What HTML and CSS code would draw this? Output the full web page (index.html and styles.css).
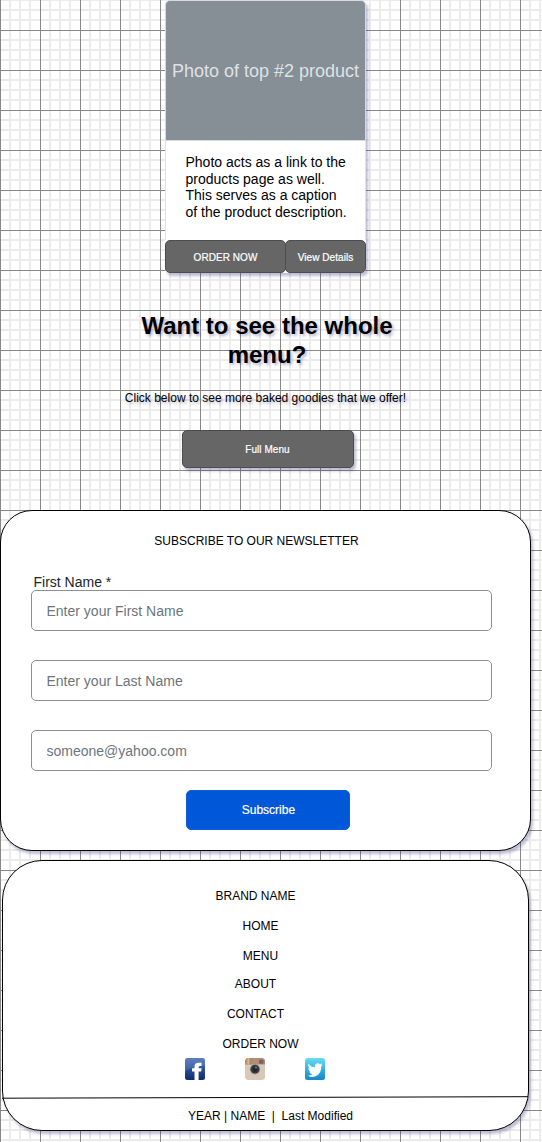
FILE: index.html
```html
<!DOCTYPE html>
<html lang="en">
<head>
<meta charset="utf-8">
<title>Bakery wireframe</title>
<link rel="stylesheet" href="styles.css">
</head>
<body>
<main class="page">
  <article class="card">
    <div class="photo">Photo of top #2 product</div>
    <p class="caption">Photo acts as a link to the<br>products page as well.<br>This serves as a caption<br>of the product description.</p>
    <div class="actions">
      <button class="btn order">ORDER NOW</button>
      <button class="btn details">View Details</button>
    </div>
  </article>
  <section class="menu">
    <h1>Want to see the whole<br>menu?</h1>
    <p class="blurb">Click below to see more baked goodies that we offer!</p>
    <button class="btn full">Full Menu</button>
  </section>
  <form class="newsletter">
    <h2>SUBSCRIBE TO OUR NEWSLETTER</h2>
    <label for="first">First Name *</label>
    <input id="first" placeholder="Enter your First Name">
    <input placeholder="Enter your Last Name">
    <input placeholder="someone@yahoo.com">
    <button type="button" class="subscribe">Subscribe</button>
  </form>
  <footer class="footer">
    <nav class="links">
      <a class="left">BRAND NAME</a>
      <a>HOME</a>
      <a class="tight">MENU</a>
      <a class="left">ABOUT</a>
      <a class="left">CONTACT</a>
      <a>ORDER NOW</a>
    </nav>
    <div class="social">
      <svg width="20" height="22" viewBox="0 0 20 22">
        <defs><linearGradient id="fb" x1="0" y1="0" x2="0" y2="1"><stop offset="0" stop-color="#5277b9"/><stop offset=".5" stop-color="#2d5098"/><stop offset="1" stop-color="#10296c"/></linearGradient></defs>
        <rect width="20" height="22" rx="2.5" fill="url(#fb)"/>
        <path d="M0 2.5Q0 0 2.5 0h15Q20 0 20 2.5V8Q9 8 0 13z" fill="#7894cc" opacity=".3"/>
        <path d="M9.500 22v-8.500H7v-3.300h2.500V8.600Q9.500 4.800 13.500 4.800H16.500v3.100h-1.400q-1.500 0-1.500 1.300v1h3l-.5 3.300h-2.500V22z" fill="#fff"/>
      </svg>
      <svg width="20" height="22" viewBox="0 0 20 22">
        <defs><clipPath id="cam"><rect width="20" height="22" rx="3.500"/></clipPath></defs>
        <g clip-path="url(#cam)">
          <rect width="20" height="22" fill="#d8c8b8"/>
          <rect width="20" height="6.500" fill="#b58b72"/>
          <rect width="1.500" height="6.500" x="1" fill="#d9896f"/>
          <rect width="1.500" height="6.500" x="2.500" fill="#d9bd78"/>
          <rect width="1.500" height="6.500" x="4" fill="#92aa83"/>
          <rect width="1.500" height="6.500" x="5.500" fill="#7698a5"/>
        </g>
        <rect x="14" y="1.800" width="4.500" height="4" rx="1" fill="#6a686a"/>
        <circle cx="10" cy="11.200" r="5.200" fill="#a39b92"/>
        <circle cx="10" cy="11.200" r="4.400" fill="#343b42"/>
        <circle cx="10" cy="11.200" r="2.500" fill="#20262c"/>
        <circle cx="11" cy="9.600" r="1.100" fill="#6b747b"/>
      </svg>
      <svg width="20" height="22" viewBox="0 0 20 22">
        <defs><linearGradient id="tw" x1="0" y1="0" x2="0" y2="1"><stop offset="0" stop-color="#6bdcf2"/><stop offset=".5" stop-color="#35b4de"/><stop offset="1" stop-color="#1687c8"/></linearGradient></defs>
        <rect width="20" height="22" rx="2.500" fill="url(#tw)"/>
        <path transform="translate(-.7 .4) scale(1.05)" d="M4 5.200Q6.500 8.500 10 8.700 9.500 4.800 12.700 4.500q1.400 0 2.300 1 1.200-.2 2-.9-.2 1.200-1.200 2l1.800-.5-1.500 1.700q.1 5.500-3.600 8.300-4.400 3.200-9.200.4 2.500.2 4.400-1.400-2.200-.4-2.800-2.400h1.400Q3.900 11.900 3.700 9.300l1.400.4Q2.900 7.700 4 5.200z" fill="#fff"/>
      </svg>
    </div>
    <svg class="rule" width="527" height="3" viewBox="0 0 527 3"><path d="M0 2.200L526 .7" stroke="#000" stroke-width="1"/></svg>
    <p class="legal">YEAR | NAME&nbsp; |&nbsp; Last Modified</p>
  </footer>
</main>
</body>
</html>
```
FILE: styles.css
```css
* { box-sizing: border-box; }
body {
  margin: 0;
  font-family: "Liberation Sans", Arial, sans-serif;
  font-size: 12px;
  color: #000;
  background-color: #fff;
  background-image:
    linear-gradient(90deg, #888 1px, transparent 1px),
    linear-gradient(#888 1px, transparent 1px),
    linear-gradient(90deg, transparent 9px, #ececec 9px, #ececec 11px, transparent 11px, transparent 19px, #ececec 19px, #ececec 21px, transparent 21px, transparent 29px, #ececec 29px, #ececec 31px, transparent 31px),
    linear-gradient(transparent 9px, rgba(0,0,0,.08) 9px, rgba(0,0,0,.08) 11px, transparent 11px, transparent 19px, rgba(0,0,0,.08) 19px, rgba(0,0,0,.08) 21px, transparent 21px, transparent 29px, rgba(0,0,0,.08) 29px, rgba(0,0,0,.08) 31px, transparent 31px);
  background-size: 40px 40px;
  background-position: 0 0, 0 30px, 0 0, 0 30px;
}
.page {
  --shadow: 2px 3px 3px rgba(50, 50, 120, .32);
  width: 542px;
  height: 1142px;
  overflow: hidden;
  display: flex;
  flex-direction: column;
}
p, h1, h2 { margin: 0; }
button { font-family: inherit; padding: 0; }
.card {
  width: 201px;
  height: 273px;
  margin-left: 165px;
  border-radius: 5px;
  background: #fff;
  box-shadow: var(--shadow);
}
.photo {
  height: 141px;
  border: 1px solid #d5dae2;
  border-radius: 5px 5px 0 0;
  background: #868e96;
  color: #dee2e6;
  font-size: 18px;
  line-height: 140px;
  text-align: center;
  white-space: nowrap;
}
.caption {
  height: 99px;
  padding: 13px 0 0 19.500px;
  border: solid #dfe2e6;
  border-width: 0 1px;
  font-size: 14px;
  line-height: 16.700px;
  white-space: nowrap;
}
.actions { display: flex; }
.btn { border: 1px solid #4d4d4d; border-radius: 5px; background: #666; color: #fff; font-size: 10px; letter-spacing: .06px; -webkit-text-stroke: .2px #fff; }
.order { width: 121px; height: 33px; padding-top: 1px; }
.details { width: 81px; height: 33px; margin-left: -1px; padding-top: 1px; }
.menu { height: 237px; padding: 38px 0 0; display: flex; flex-direction: column; align-items: center; margin-right: 8px; }
h1 { font-size: 24px; line-height: 29px; text-align: center; text-shadow: 2px 2px 3px rgba(50, 50, 120, .35); }
.blurb { margin: 22px 3px 0 0; line-height: 14px; text-shadow: 2px 2px 3px rgba(50, 50, 120, .35); }
.full { width: 172px; height: 38px; margin-top: 25px; box-shadow: var(--shadow); position: relative; left: .5px; }
.newsletter {
  width: 531px;
  height: 341px;
  padding: 23px 0 0 30px;
  border: 1px solid #000;
  border-radius: 32px;
  background: #fff;
  box-shadow: var(--shadow);
  display: flex;
  flex-direction: column;
}
h2 { width: 451px; font-size: 12px; font-weight: normal; line-height: 14px; text-align: center; }
label { margin: 26px 0 0 2.500px; height: 16px; line-height: 16px; font-size: 14px; color: #212529; }
input {
  width: 461px;
  height: 41px;
  flex: none;
  margin: 0 0 29px;
  padding: 0 14.500px;
  border: 1px solid #8c8f92;
  border-radius: 5px;
  background: transparent;
  font: 14px "Liberation Sans", Arial, sans-serif;
}
input::placeholder { color: #6c757d; opacity: 1; }
.subscribe {
  width: 164px;
  height: 40px;
  flex: none;
  margin: -9.600px 0 0 155.400px;
  border: 1px solid #0860df;
  border-radius: 5px;
  background: #0057d8;
  color: #fff;
  font-size: 12px;
  -webkit-text-stroke: .2px #fff;
}
.footer {
  width: 527px;
  height: 271px;
  margin: 9px 0 0 2px;
  border: 1px solid #000;
  border-radius: 40px;
  background: #fff;
  box-shadow: var(--shadow);
  display: flex;
  flex-direction: column;
}
.links { width: 515px; padding-top: 28px; display: flex; flex-direction: column; align-items: center; }
.links a { height: 30px; line-height: 14px; }
.links .tight { height: 28px; }
.links .left { margin-right: 10px; }
.social { margin: -9px 0 0 182px; height: 22px; display: flex; gap: 40px; }
.rule { margin: 16px 0 0 -1px; flex: none; }
.legal { width: 535px; margin-top: 10px; text-align: center; line-height: 14px; }
```
